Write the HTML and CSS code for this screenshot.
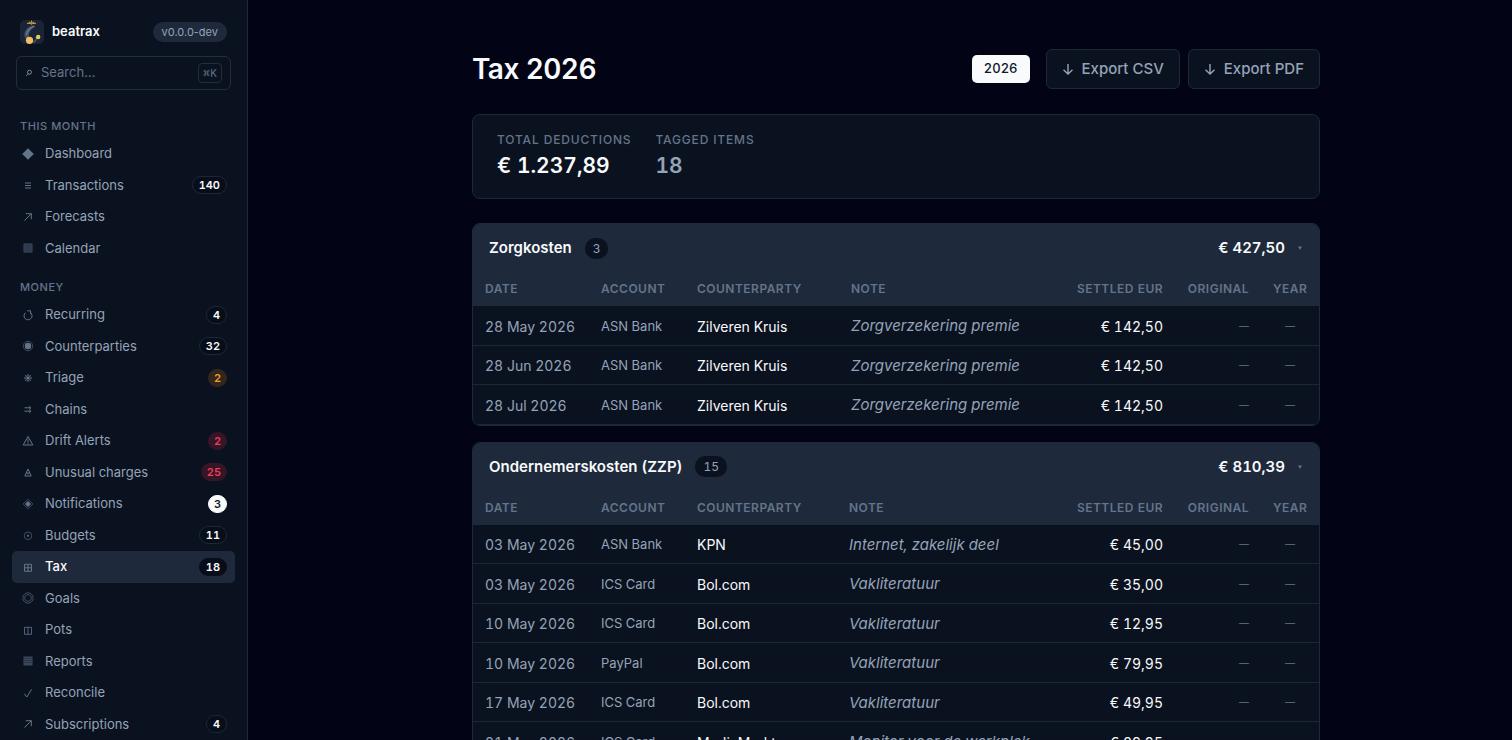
FILE: index.html
```html
<!DOCTYPE html>
<html lang="en">
<head>
<meta charset="utf-8">
<meta name="viewport" content="width=device-width, initial-scale=1">
<title>Tax 2026 · beatrax</title>
<link rel="stylesheet" href="styles.css">
</head>
<body>
<div class="app">
  <aside class="sidebar">
    <div class="brand">
      <svg class="logo" viewBox="0 0 24 24" aria-hidden="true">
        <rect width="24" height="24" rx="5" fill="#1a2436"/>
        <path d="M14.500 5.500C8 6 4 10 4.500 16C5 19 7 20 9 19C8 14 10 9 15 7Z" fill="#3f5366"/>
        <path d="M14 6C10 8 7 11 6.500 15" fill="none" stroke="#6b8191" stroke-width="1.200"/>
        <path d="M7 3.300H16M9 2L11.500 4L14 2M11.500 0.500V5" fill="none" stroke="#b99436" stroke-width="1.200"/>
        <path d="M12 22C15 22.500 17 20 16 17" fill="none" stroke="#4b5563" stroke-width="1.500"/>
        <circle cx="9.500" cy="20.300" r="3.600" fill="#f5bd66"/>
        <circle cx="18.200" cy="17" r="2.200" fill="#e0cf55"/>
      </svg>
      <span class="brand-name">beatrax</span>
      <span class="version">v0.0.0-dev</span>
    </div>
    <button class="search" type="button">
      <svg class="search-icon" viewBox="0 0 10 10" aria-hidden="true"><circle cx="5.600" cy="4" r="2.500"/><path d="M3.800 5.800L1.800 8.500"/></svg>
      <span class="search-text">Search…</span>
      <kbd class="kbd"><svg class="cmd" viewBox="0 0 10 10" aria-hidden="true"><path d="M3.500 3.500H6.500V6.500H3.500ZM3.500 3.500H2.300A1.200 1.200 0 1 1 3.500 2.300ZM6.500 3.500V2.300A1.200 1.200 0 1 1 7.700 3.500ZM6.500 6.500H7.700A1.200 1.200 0 1 1 6.500 7.700ZM3.500 6.500V7.700A1.200 1.200 0 1 1 2.300 6.500Z"/></svg>K</kbd>
    </button>
    <nav class="nav" aria-label="Main">
      <h2 class="nav-label">This month</h2>
      <a class="nav-item" href="#"><svg class="icon" viewBox="0 0 16 16"><path class="fill" d="M8 2.200L13.800 8L8 13.800L2.200 8Z"/></svg>Dashboard</a>
      <a class="nav-item" href="#"><svg class="icon" viewBox="0 0 16 16"><path d="M5 6H11M5 8.500H11M5 11H11"/></svg>Transactions<span class="badge">140</span></a>
      <a class="nav-item" href="#"><svg class="icon" viewBox="0 0 16 16"><path d="M4.500 11.500L11.300 4.700M5.800 4.700H11.300V10.200"/></svg>Forecasts</a>
      <a class="nav-item" href="#"><svg class="icon" viewBox="0 0 16 16"><rect class="square" x="3.500" y="3.500" width="9" height="9"/><path class="grid" d="M3.500 5.700H12.500M3.500 8H12.500M3.500 10.300H12.500M5.700 3.500V12.500M8 3.500V12.500M10.300 3.500V12.500"/></svg>Calendar</a>

      <h2 class="nav-label">Money</h2>
      <a class="nav-item" href="#"><svg class="icon" viewBox="0 0 16 16"><path d="M10.800 5.900A4 4 0 1 1 5.500 5.700M7.300 3.800H10.600V7.200"/></svg>Recurring<span class="badge">4</span></a>
      <a class="nav-item" href="#"><svg class="icon" viewBox="0 0 16 16"><circle class="dim" cx="8" cy="8" r="4.700"/><circle class="fill" cx="8" cy="8" r="3.200"/></svg>Counterparties<span class="badge">32</span></a>
      <a class="nav-item" href="#"><svg class="icon" viewBox="0 0 16 16"><path d="M8 4V12M4 8H12M5.200 5.200L10.800 10.800M10.800 5.200L5.200 10.800"/><circle class="dim" cx="8" cy="8" r="2.500"/></svg>Triage<span class="badge warn">2</span></a>
      <a class="nav-item" href="#"><svg class="icon" viewBox="0 0 16 16"><path d="M4.500 6.800H11M4.500 10.200H11M9.300 5.300L11 6.800L9.300 8.300M9.300 8.700L11 10.200L9.300 11.700"/></svg>Chains</a>
      <a class="nav-item" href="#"><svg class="icon" viewBox="0 0 16 16"><path d="M8 3.500L12.800 12H3.200ZM8 6.200V9.500M8 10.300V11.200"/></svg>Drift Alerts<span class="badge alert">2</span></a>
      <a class="nav-item" href="#"><svg class="icon" viewBox="0 0 16 16"><path d="M8 5L11.200 12H4.800ZM6.300 9H9.700M8 9V10.500"/></svg>Unusual charges<span class="badge alert">25</span></a>
      <a class="nav-item" href="#"><svg class="icon" viewBox="0 0 16 16"><path class="dim" d="M8 3.200L12.800 8L8 12.800L3.200 8Z"/><path class="fill" d="M8 5L11 8L8 11L5 8Z"/></svg>Notifications<span class="badge solid">3</span></a>
      <a class="nav-item" href="#"><svg class="icon" viewBox="0 0 16 16"><circle class="dim" cx="8" cy="8.800" r="3.800"/><circle class="fill" cx="8" cy="8.800" r="1"/></svg>Budgets<span class="badge">11</span></a>
      <a class="nav-item active" href="#" aria-current="page"><svg class="icon" viewBox="0 0 16 16"><path d="M4.500 5.300H11.500V12.300H4.500ZM8 5.300V12.300M4.500 8.800H11.500"/></svg>Tax<span class="badge">18</span></a>
      <a class="nav-item" href="#"><svg class="icon" viewBox="0 0 16 16"><circle class="dim" cx="8" cy="8" r="5.200"/><circle class="dim" cx="8" cy="8" r="3.400"/></svg>Goals</a>
      <a class="nav-item" href="#"><svg class="icon" viewBox="0 0 16 16"><path d="M4.500 5.300H11.500V12.300H4.500ZM8 5.300V12.300" opacity="0.800"/></svg>Pots</a>
      <a class="nav-item" href="#"><svg class="icon" viewBox="0 0 16 16"><rect class="square" x="3.500" y="3.500" width="9" height="9"/><path class="grid" d="M3.500 5.500H12.500M3.500 7.500H12.500M3.500 9.500H12.500"/></svg>Reports</a>
      <a class="nav-item" href="#"><svg class="icon" viewBox="0 0 16 16"><path d="M4.300 8.800L6.800 12L11.500 4.500"/></svg>Reconcile</a>
      <a class="nav-item" href="#"><svg class="icon" viewBox="0 0 16 16"><path d="M4.500 11.500L11.300 4.700M5.800 4.700H11.300V10.200"/></svg>Subscriptions<span class="badge">4</span></a>
    </nav>
  </aside>

  <main class="main">
    <div class="content">
      <header class="page-head">
        <h1 class="title">Tax 2026</h1>
        <div class="actions">
          <button class="year" type="button" aria-pressed="true">2026</button>
          <div class="exports">
            <button class="btn" type="button"><svg class="arrow" viewBox="0 0 12 16" aria-hidden="true"><path d="M6 3V13M1.500 8.700L6 13L10.500 8.700"/></svg>Export CSV</button>
            <button class="btn" type="button"><svg class="arrow" viewBox="0 0 12 16" aria-hidden="true"><path d="M6 3V13M1.500 8.700L6 13L10.500 8.700"/></svg>Export PDF</button>
          </div>
        </div>
      </header>

      <dl class="summary">
        <div><dt class="caption">Total deductions</dt><dd class="figure">€ 1.237,89</dd></div>
        <div><dt class="caption">Tagged items</dt><dd class="figure muted">18</dd></div>
      </dl>

      <section class="group">
        <button class="group-head" type="button" aria-expanded="true">
          <span class="group-name">Zorgkosten</span><span class="count">3</span>
          <span class="group-total">€ 427,50</span>
          <svg class="caret" viewBox="0 0 6 6" aria-hidden="true"><path d="M1 1.500H5L3 5Z"/></svg>
        </button>
        <table class="items">
          <colgroup><col class="c-date"><col class="c-account"><col class="c-party"><col><col class="c-settled"><col class="c-original"><col class="c-year"></colgroup>
          <thead><tr><th>Date</th><th>Account</th><th>Counterparty</th><th>Note</th><th class="num">Settled EUR</th><th class="num">Original</th><th class="mid">Year</th></tr></thead>
          <tbody>
            <tr><td class="date">28 May 2026</td><td class="account">ASN Bank</td><td>Zilveren Kruis</td><td class="note">Zorgverzekering premie</td><td class="num">€ 142,50</td><td class="num none">—</td><td class="mid none">—</td></tr>
            <tr><td class="date">28 Jun 2026</td><td class="account">ASN Bank</td><td>Zilveren Kruis</td><td class="note">Zorgverzekering premie</td><td class="num">€ 142,50</td><td class="num none">—</td><td class="mid none">—</td></tr>
            <tr><td class="date">28 Jul 2026</td><td class="account">ASN Bank</td><td>Zilveren Kruis</td><td class="note">Zorgverzekering premie</td><td class="num">€ 142,50</td><td class="num none">—</td><td class="mid none">—</td></tr>
          </tbody>
        </table>
      </section>

      <section class="group">
        <button class="group-head" type="button" aria-expanded="true">
          <span class="group-name">Ondernemerskosten (ZZP)</span><span class="count">15</span>
          <span class="group-total">€ 810,39</span>
          <svg class="caret" viewBox="0 0 6 6" aria-hidden="true"><path d="M1 1.500H5L3 5Z"/></svg>
        </button>
        <table class="items">
          <colgroup><col class="c-date"><col class="c-account"><col class="c-party-narrow"><col><col class="c-settled"><col class="c-original"><col class="c-year"></colgroup>
          <thead><tr><th>Date</th><th>Account</th><th>Counterparty</th><th>Note</th><th class="num">Settled EUR</th><th class="num">Original</th><th class="mid">Year</th></tr></thead>
          <tbody>
            <tr><td class="date">03 May 2026</td><td class="account">ASN Bank</td><td>KPN</td><td class="note">Internet, zakelijk deel</td><td class="num">€ 45,00</td><td class="num none">—</td><td class="mid none">—</td></tr>
            <tr><td class="date">03 May 2026</td><td class="account">ICS Card</td><td>Bol.com</td><td class="note">Vakliteratuur</td><td class="num">€ 35,00</td><td class="num none">—</td><td class="mid none">—</td></tr>
            <tr><td class="date">10 May 2026</td><td class="account">ICS Card</td><td>Bol.com</td><td class="note">Vakliteratuur</td><td class="num">€ 12,95</td><td class="num none">—</td><td class="mid none">—</td></tr>
            <tr><td class="date">10 May 2026</td><td class="account">PayPal</td><td>Bol.com</td><td class="note">Vakliteratuur</td><td class="num">€ 79,95</td><td class="num none">—</td><td class="mid none">—</td></tr>
            <tr><td class="date">17 May 2026</td><td class="account">ICS Card</td><td>Bol.com</td><td class="note">Vakliteratuur</td><td class="num">€ 49,95</td><td class="num none">—</td><td class="mid none">—</td></tr>
            <tr><td class="date">21 May 2026</td><td class="account">ICS Card</td><td>MediaMarkt</td><td class="note">Monitor voor de werkplek</td><td class="num">€ 89,95</td><td class="num none">—</td><td class="mid none">—</td></tr>
          </tbody>
        </table>
      </section>
    </div>
  </main>
</div>
</body>
</html>
```
FILE: styles.css
```css
:root {
  --bg: #020416;
  --surface: #0b121f;
  --raised: #1e293b;
  --line: #1e2737;
  --text: #f8fafc;
  --soft: #94a3b8;
  --dim: #64748b;
}

* { box-sizing: border-box; }

body {
  margin: 0;
  background: var(--bg);
  color: var(--text);
  font: 15px/1.5 Inter, sans-serif;
}

button { font: inherit; color: inherit; cursor: pointer; }
a { color: inherit; text-decoration: none; }
h1, h2, dl, dd { margin: 0; }

.app { display: flex; height: 100vh; }

/* Sidebar */
.sidebar {
  flex: 0 0 248px;
  padding: 20px 12px;
  background: var(--surface);
  border-right: 1px solid var(--raised);
  overflow-y: auto;
  scrollbar-width: none;
}
.brand { display: flex; align-items: center; gap: 8px; height: 24px; padding: 0 8px; }
.logo { width: 24px; height: 24px; }
.brand-name { font-size: 13px; font-weight: 600; }
.version {
  margin-left: auto;
  padding: 2px 9px;
  border-radius: 10px;
  background: var(--raised);
  color: var(--soft);
  font-size: 11px;
  line-height: 16px;
}
.search {
  display: flex;
  align-items: center;
  gap: 8px;
  width: calc(100% - 8px);
  height: 34px;
  margin: 12px 4px 0;
  padding: 0 8px;
  border: 1px solid #242d3c;
  border-radius: 6px;
  background: none;
  color: var(--dim);
  font-size: 13px;
  text-align: left;
}
.search-icon { width: 8px; height: 10px; fill: none; stroke: var(--soft); }
.search-text { flex: 1; }
.kbd {
  display: flex;
  align-items: center;
  height: 20px;
  padding: 0 4px;
  border: 1px solid #242d3c;
  border-radius: 4px;
  font: 10px/15px Inter, sans-serif;
}
.cmd { width: 7px; height: 8px; fill: none; stroke: currentColor; }

.nav { display: flex; flex-direction: column; padding-top: 13px; }
.nav-label {
  margin-top: 16px;
  padding: 0 8px 4px;
  color: var(--dim);
  font-size: 11px;
  font-weight: 500;
  line-height: 15px;
  letter-spacing: 0.05em;
  text-transform: uppercase;
}
.nav-item {
  display: flex;
  align-items: center;
  gap: 9px;
  padding: 6px 8px;
  border-radius: 5px;
  color: var(--soft);
  font-size: 13px;
}
.nav-item.active { background: var(--raised); color: var(--text); font-weight: 500; }
.icon { width: 16px; height: 16px; fill: none; stroke: var(--dim); }
.icon .fill { fill: var(--dim); stroke: none; }
.icon .dim { stroke: #3f4c60; }
.icon .square { fill: #3a475b; stroke: none; }
.icon .grid { stroke: #2b3749; }
.badge {
  min-width: 19px;
  margin-left: auto;
  padding: 0 6px;
  border: 1px solid var(--line);
  border-radius: 9px;
  background: #080d1a;
  color: var(--text);
  font-size: 11px;
  font-weight: 600;
  font-variant-numeric: tabular-nums;
  line-height: 16px;
  text-align: center;
}
.active .badge { border-color: #080d1a; }
.warn { background: #33261d; border-color: #33261d; color: #f59e2b; padding: 0 5px; }
.alert { background: #351526; border-color: #351526; color: #ef3e5c; padding: 0 5px; }
.solid { background: var(--text); border-color: var(--text); color: #0f172a; padding: 0 5px; }

/* Page */
.main {
  flex: 1;
  min-width: 0;
  padding: 48px 24px 48px 56px;
  font-variant-numeric: tabular-nums;
  overflow-y: auto;
  scrollbar-width: none;
}
.content { max-width: 848px; margin: 0 auto; }
.page-head { display: flex; align-items: center; justify-content: space-between; }
.title { font-size: 28px; font-weight: 600; line-height: 42px; letter-spacing: -0.02em; }
.actions { display: flex; align-items: center; gap: 16px; }
.exports { display: flex; gap: 8px; }
.year {
  padding: 4px 12px;
  border: 0;
  border-radius: 5px;
  background: var(--text);
  color: #0f172a;
  font-size: 13px;
  font-weight: 500;
}
.btn {
  display: flex;
  align-items: center;
  gap: 8px;
  padding: 8px 15px;
  border: 1px solid var(--line);
  border-radius: 6px;
  background: var(--surface);
  color: var(--soft);
  font-weight: 500;
}
.arrow { width: 12px; height: 16px; fill: none; stroke: currentColor; stroke-width: 1.4; }

.summary {
  display: flex;
  gap: 24px;
  margin: 24px 0;
  padding: 16px 24px;
  border: 1px solid var(--line);
  border-radius: 8px;
  background: var(--surface);
}
.caption, .items th {
  color: var(--dim);
  font-size: 12px;
  font-weight: 500;
  line-height: 18px;
  letter-spacing: 0.07em;
  text-transform: uppercase;
}
.figure { font-size: 21px; font-weight: 600; line-height: 33px; }
.muted { color: var(--soft); }

.group {
  margin-bottom: 16px;
  border: 1px solid var(--raised);
  border-radius: 8px;
  background: var(--surface);
  overflow: hidden;
}
.group-head {
  display: flex;
  align-items: center;
  width: 100%;
  padding: 12px 16px;
  border: 0;
  background: var(--raised);
  line-height: 24px;
}
.group-name, .group-total { font-weight: 600; }
.count {
  margin-left: 13px;
  padding: 2px 8px;
  border-radius: 10px;
  background: var(--surface);
  color: var(--soft);
  font-size: 12px;
  line-height: 17px;
}
.group-total { margin-left: auto; }
.caret { width: 6px; height: 6px; margin-left: 12px; fill: var(--dim); }

.items { width: 100%; table-layout: fixed; border-collapse: separate; border-spacing: 0; }
.items th {
  padding: 8px 12px;
  background: var(--raised);
  font-weight: 600;
  letter-spacing: 0.04em;
  text-align: left;
}
.items td {
  padding: 9px 12px 7px;
  border-bottom: 1px solid var(--line);
  font-size: 14px;
  white-space: nowrap;
}
.items .num { text-align: right; }
.items .mid { text-align: center; }
.date { color: var(--soft); }
.items .account { color: var(--soft); font-size: 13px; }
.items .note { color: var(--soft); font-size: 15px; font-style: italic; }
.items .none { color: var(--dim); font-size: 10px; }
.c-date { width: 116px; }
.c-account { width: 96px; }
.c-party { width: 154px; }
.c-party-narrow { width: 152px; }
.c-settled { width: 120px; }
.c-original { width: 86px; }
.c-year { width: 58px; }
```
